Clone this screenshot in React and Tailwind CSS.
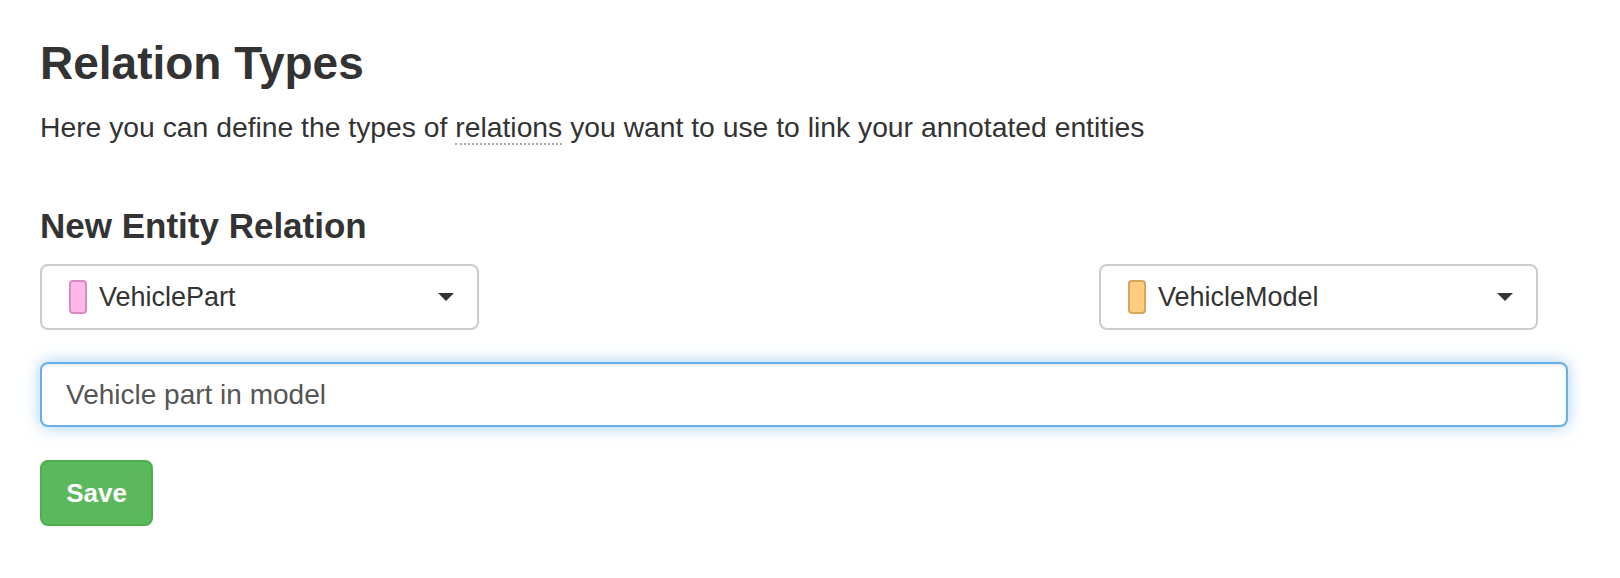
const Caret = () => (
  <svg width="16" height="8" viewBox="0 0 16 8" className="shrink-0">
    <polygon points="0,0 16,0 8,8" fill="#333" />
  </svg>
);

const EntitySelect = ({ label, swatch }) => (
  <div className="flex h-[66px] w-[439px] items-center rounded-[8px] border-2 border-[#ccc] bg-white pl-[27px] pr-[23px]">
    <span className={`h-[34px] w-[18px] shrink-0 rounded-[4px] border-2 ${swatch}`}></span>
    <span className="ml-[12px] flex-1 text-[27px] leading-none text-[#333]">{label}</span>
    <Caret />
  </div>
);

const App = () => {
  return (
    <div className="min-h-[578px] bg-white px-[40px] pt-[40px] font-['Liberation_Sans',Arial,sans-serif] text-[#333]">
      <div className="w-[1528px]">
        <h1 className="text-[46px] font-bold leading-[46px]">Relation Types</h1>
        <p className="mt-[21px] text-[28.3px] leading-[40px]">
          Here you can define the types of{' '}
          <span className="border-b-2 border-dotted border-[#aaa]">relations</span>{' '}
          you want to use to link your annotated entities
        </p>

        <h2 className="mt-[59px] text-[35px] font-bold leading-[40px]">New Entity Relation</h2>

        <div className="mt-[18px] flex justify-between pr-[30px]">
          <EntitySelect label="VehiclePart" swatch="border-[#d98cc0] bg-[#ffb8ea]" />
          <EntitySelect label="VehicleModel" swatch="border-[#d4a55a] bg-[#ffcc80]" />
        </div>

        <input
          readOnly
          value="Vehicle part in model"
          className="mt-[32px] block h-[65px] w-full rounded-[8px] border-2 border-[#66afe9] bg-white px-[24px] text-[28px] text-[#555] shadow-[inset_0_2px_2px_rgba(0,0,0,0.075),0_0_16px_rgba(102,175,233,0.6)] outline-none"
        />

        <button className="mt-[33px] h-[66px] w-[113px] rounded-[8px] border-2 border-[#4cae4c] bg-[#5cb85c] text-[26px] font-bold text-white">
          Save
        </button>
      </div>
    </div>
  );
};

export default App;
